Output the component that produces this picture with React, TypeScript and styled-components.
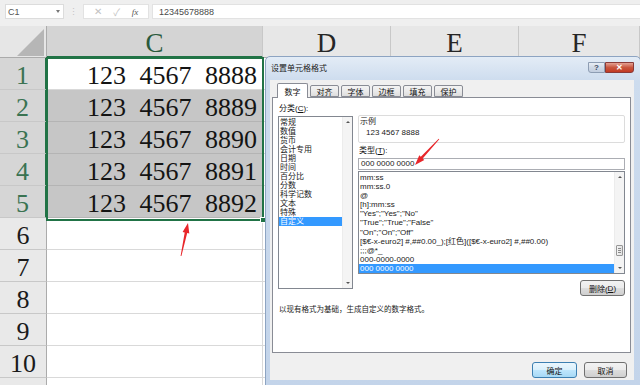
import React from 'react';
import styled, { createGlobalStyle } from 'styled-components';

const Global = createGlobalStyle`
  html, body { margin: 0; padding: 0; width: 640px; height: 385px; overflow: hidden; background: #fff; }
  #root { width: 640px; height: 385px; position: relative; overflow: hidden; }
`;

const UI = `"Liberation Sans", "Noto Sans CJK SC", sans-serif`;
const SERIF = `"Liberation Serif", "Noto Serif", serif`;

/* ---------- formula bar ---------- */
const FormulaBar = styled.div`
  height: 26px;
  box-sizing: border-box;
  background: #efefef;
  display: flex;
  align-items: flex-start;
  padding: 4px 0 0 5px;
  font-family: ${UI};
  font-size: 9px;
  color: #555;
`;
const NameBox = styled.div`
  width: 59px;
  height: 15px;
  box-sizing: border-box;
  background: #fff;
  border: 1px solid #dcdcdc;
  display: flex;
  align-items: center;
  justify-content: space-between;
  padding: 0 3px 0 2px;
`;
const Caret = styled.span`
  width: 0;
  height: 0;
  border-left: 2.5px solid transparent;
  border-right: 2.5px solid transparent;
  border-top: 3px solid #777;
`;
const Grip = styled.div`
  width: 19px;
  height: 15px;
  display: flex;
  align-items: center;
  justify-content: center;
  color: #c4c4c4;
  font-size: 9px;
`;
const FxBox = styled.div`
  width: 66px;
  height: 15px;
  box-sizing: border-box;
  background: #fff;
  border: 1px solid #e2e2e2;
  display: flex;
  align-items: center;
  justify-content: space-around;
  padding: 0 4px;
`;
const FxIcon = styled.span<{ $dark?: boolean }>`
  color: ${(p) => (p.$dark ? '#555' : '#c2c2c2')};
  font-family: ${(p) => (p.$dark ? SERIF : UI)};
  font-style: ${(p) => (p.$dark ? 'italic' : 'normal')};
  font-size: ${(p) => (p.$dark ? '9px' : '10px')};
`;
const FormulaInput = styled.div`
  flex: 1;
  height: 15px;
  margin-left: 3px;
  box-sizing: border-box;
  background: #fff;
  border: 1px solid #e2e2e2;
  border-right: none;
  display: flex;
  align-items: center;
  padding-left: 6px;
  color: #4a4a4a;
`;

/* ---------- sheet ---------- */
const SheetGrid = styled.div`
  position: relative;
  display: grid;
  grid-template-columns: 47px 216px 128px 128px 121px;
  grid-auto-rows: 32px;
  font-family: ${SERIF};
`;
const Corner = styled.div`
  position: relative;
  background: #e6e6e6;
  border-right: 1px solid #ababab;
  border-bottom: 1px solid #ababab;
  box-sizing: border-box;
  &::after {
    content: '';
    position: absolute;
    right: 2px;
    bottom: 1px;
    width: 0;
    height: 0;
    border-left: 27px solid transparent;
    border-bottom: 27px solid #b6b6b6;
  }
`;
const ColHeader = styled.div<{ $sel?: boolean }>`
  box-sizing: border-box;
  background: ${(p) => (p.$sel ? '#d4d4d4' : '#e7e7e7')};
  border-right: 1px solid #c8c8c8;
  border-bottom: ${(p) => (p.$sel ? '2px solid #217346' : '1px solid #ababab')};
  color: ${(p) => (p.$sel ? '#2a5a3c' : '#262626')};
  font-size: 27px;
  line-height: 26px;
  padding-top: 4px;
  text-align: center;
`;
const RowHeader = styled.div<{ $sel?: boolean }>`
  box-sizing: border-box;
  background: ${(p) => (p.$sel ? '#d6d6d6' : '#e9e9e9')};
  border-bottom: 1px solid #c8c8c8;
  border-right: ${(p) => (p.$sel ? '2px solid #217346' : '1px solid #ababab')};
  color: ${(p) => (p.$sel ? '#3a7352' : '#1a1a1a')};
  font-size: 26px;
  line-height: 26px;
  padding-top: 5px;
  text-align: center;
`;
const Cell = styled.div<{ $shade?: boolean }>`
  box-sizing: border-box;
  background: ${(p) => (p.$shade ? '#c6c6c6' : '#fff')};
  border-right: 1px solid #d9d9d9;
  border-bottom: 1px solid ${(p) => (p.$shade ? '#b4b4b4' : '#d9d9d9')};
  color: #141414;
  font-size: 26px;
  line-height: 26px;
  padding: 5px 5px 0 0;
  text-align: right;
  word-spacing: 7px;
  white-space: nowrap;
`;
const Selection = styled.div`
  position: absolute;
  left: 46px;
  top: 31px;
  width: 218px;
  height: 164px;
  box-sizing: border-box;
  border: 2px solid #217346;
  pointer-events: none;
  &::after {
    content: '';
    position: absolute;
    right: -4px;
    bottom: -4px;
    width: 4px;
    height: 4px;
    background: #217346;
    border: 1px solid #fff;
  }
`;

/* ---------- dialog ---------- */
const Dialog = styled.div`
  position: absolute;
  left: 265px;
  top: 56px;
  width: 376px;
  height: 330px;
  box-sizing: border-box;
  border: 1px solid #8da4c2;
  border-radius: 5px 5px 0 0;
  background: linear-gradient(#e3ecf6, #cddcee 24px, #c3d4ea);
  display: flex;
  flex-direction: column;
  padding: 0 6px 5px 4px;
  font-family: ${UI};
  font-size: 8px;
  color: #111;
`;
const TitleBar = styled.div`
  height: 23px;
  display: flex;
  align-items: flex-start;
`;
const Title = styled.div`
  margin-top: 7px;
  padding-left: 1px;
  font-size: 8px;
  line-height: 10px;
  color: #1b1b1b;
`;
const WinButtons = styled.div`
  margin-left: auto;
  margin-top: 5px;
  display: flex;
`;
const WinBtn = styled.div<{ $close?: boolean }>`
  width: ${(p) => (p.$close ? '29px' : '17px')};
  height: 11px;
  box-sizing: border-box;
  border: 1px solid ${(p) => (p.$close ? '#8a3a38' : '#8d9db3')};
  border-radius: ${(p) => (p.$close ? '0 0 3px 0' : '0 0 0 3px')};
  background: ${(p) =>
    p.$close ? 'linear-gradient(#e4a194, #c9563f 50%, #c23a23)' : 'linear-gradient(#e9eef5, #cfd9e6 50%, #c2cedf)'};
  color: ${(p) => (p.$close ? '#fff' : '#3b4a60')};
  font-size: 8px;
  line-height: 9px;
  font-weight: bold;
  text-align: center;
`;
const Body = styled.div`
  flex: 1;
  background: #f0f0f0;
  padding: 3px 3px 0 2px;
  display: flex;
  flex-direction: column;
`;
const TabRow = styled.div`
  height: 14px;
  display: flex;
  align-items: flex-end;
  gap: 2px;
  padding-left: 5px;
  position: relative;
  z-index: 1;
`;
const Tab = styled.div<{ $active?: boolean }>`
  width: ${(p) => (p.$active ? '31px' : '29px')};
  height: ${(p) => (p.$active ? '15px' : '12px')};
  margin-bottom: ${(p) => (p.$active ? '-1px' : '0')};
  box-sizing: border-box;
  border: 1px solid #898c95;
  border-bottom: ${(p) => (p.$active ? 'none' : '1px solid #898c95')};
  border-radius: 2px 2px 0 0;
  background: ${(p) => (p.$active ? '#fff' : 'linear-gradient(#f3f3f3, #ebebeb 50%, #dddddd)')};
  display: flex;
  align-items: center;
  justify-content: center;
  font-size: 8px;
`;
const Panel = styled.div`
  height: 256px;
  box-sizing: border-box;
  background: #fff;
  border: 1px solid #898c95;
  padding: 5px 5px 0 5px;
  display: flex;
  flex-direction: column;
`;
const Columns = styled.div`
  display: flex;
  gap: 5px;
`;
const LeftCol = styled.div`
  width: 75px;
  display: flex;
  flex-direction: column;
`;
const RightCol = styled.div`
  width: 267px;
  display: flex;
  flex-direction: column;
`;
const Label = styled.div<{ $mt?: number }>`
  height: 11px;
  line-height: 11px;
  margin-top: ${(p) => p.$mt ?? 0}px;
  padding-left: 1px;
  & u { text-decoration: underline; }
`;
const ListBox = styled.div<{ $h: number; $mt: number }>`
  height: ${(p) => p.$h}px;
  margin-top: ${(p) => p.$mt}px;
  box-sizing: border-box;
  border: 1px solid #828790;
  background: #fff;
  display: flex;
`;
const Items = styled.div`
  flex: 1;
  padding-top: 1px;
  overflow: hidden;
`;
const Item = styled.div<{ $sel?: boolean; $lh: number }>`
  height: ${(p) => p.$lh}px;
  line-height: ${(p) => p.$lh}px;
  padding-left: 1px;
  white-space: nowrap;
  background: ${(p) => (p.$sel ? '#3399ff' : 'transparent')};
  color: ${(p) => (p.$sel ? '#fff' : '#222')};
`;
const ScrollBar = styled.div`
  width: 9px;
  background: #f4f4f4;
  border-left: 1px solid #ececec;
  display: flex;
  flex-direction: column;
  align-items: center;
`;
const Arrow = styled.div<{ $down?: boolean }>`
  width: 0;
  height: 0;
  margin: ${(p) => (p.$down ? 'auto 0 4px' : '4px 0 0')};
  border-left: 2px solid transparent;
  border-right: 2px solid transparent;
  ${(p) => (p.$down ? 'border-top: 2px solid #555;' : 'border-bottom: 2px solid #555;')}
`;
const Thumb = styled.div`
  width: 7px;
  height: 11px;
  margin-top: 67px;
  box-sizing: border-box;
  border: 1px solid #979797;
  border-radius: 1px;
  background: linear-gradient(90deg, #f3f3f3, #e2e2e2);
  display: flex;
  flex-direction: column;
  align-items: center;
  justify-content: center;
  gap: 1px;
  & > i { display: block; width: 3px; height: 1px; background: #8a8a8a; }
`;
const SampleGroup = styled.div`
  margin-top: 12px;
  height: 28px;
  box-sizing: border-box;
  border: 1px solid #dcdcdc;
  border-radius: 2px;
  padding: 0 0 0 1px;
  & > div:last-child { padding-left: 6px; }
`;
const SampleLine = styled.div`
  height: 10px;
  line-height: 10px;
  margin-top: 1px;
  color: #222;
`;
const TypeInput = styled.div`
  margin-top: 2px;
  height: 12px;
  box-sizing: border-box;
  border: 1px solid #abadb3;
  line-height: 10px;
  padding-left: 2px;
  color: #222;
`;
const PushButton = styled.div<{ $w: number; $default?: boolean }>`
  width: ${(p) => p.$w}px;
  height: 16px;
  box-sizing: border-box;
  border: 1px solid ${(p) => (p.$default ? '#3c7fb1' : '#707070')};
  border-radius: 3px;
  background: ${(p) =>
    p.$default
      ? 'linear-gradient(#eaf6fd, #d9f0fc 50%, #bee6fd 51%, #a7d9f5)'
      : 'linear-gradient(#f2f2f2, #ebebeb 50%, #dddddd 51%, #cfcfcf)'};
  display: flex;
  align-items: center;
  justify-content: center;
  font-size: 8px;
  color: #111;
  & u { text-decoration: underline; }
`;
const DeleteRow = styled.div`
  margin-top: 6px;
  display: flex;
  justify-content: flex-end;
`;
const Description = styled.div`
  margin-top: 8px;
  padding-left: 1px;
  font-size: 7.5px;
  line-height: 11px;
  color: #222;
`;
const Footer = styled.div`
  flex: 1;
  display: flex;
  justify-content: flex-end;
  align-items: flex-start;
  gap: 7px;
  padding: 9px 4px 0 0;
`;

/* ---------- red annotation arrows ---------- */
const Overlay = styled.svg`
  position: absolute;
  left: 0;
  top: 0;
  pointer-events: none;
`;

function arrowPoints(tx: number, ty: number, px: number, py: number) {
  const dx = px - tx;
  const dy = py - ty;
  const len = Math.hypot(dx, dy);
  const ux = dx / len;
  const uy = dy / len;
  const nx = -uy;
  const ny = ux;
  const hl = 10;
  const bx = px - ux * hl;
  const by = py - uy * hl;
  const pts = [
    [tx + nx * 0.4, ty + ny * 0.4],
    [bx + nx * 1.3, by + ny * 1.3],
    [bx + nx * 3.4, by + ny * 3.4],
    [px, py],
    [bx - nx * 3.4, by - ny * 3.4],
    [bx - nx * 1.3, by - ny * 1.3],
    [tx - nx * 0.4, ty - ny * 0.4],
  ];
  return pts.map((p) => p.map((v) => v.toFixed(1)).join(',')).join(' ');
}

const categories = ['常规', '数值', '货币', '会计专用', '日期', '时间', '百分比', '分数', '科学记数', '文本', '特殊', '自定义'];
const formats = [
  'mm:ss',
  'mm:ss.0',
  '@',
  '[h]:mm:ss',
  '"Yes";"Yes";"No"',
  '"True";"True";"False"',
  '"On";"On";"Off"',
  '[$€-x-euro2] #,##0.00_);[红色]([$€-x-euro2] #,##0.00)',
  ';;;@*_',
  '000-0000-0000',
  '000 0000 0000',
];
const tabs = ['数字', '对齐', '字体', '边框', '填充', '保护'];
const values = ['8888', '8889', '8890', '8891', '8892'];

export default function App() {
  const rows = Array.from({ length: 11 }, (_, i) => i + 1);
  return (
    <>
      <Global />
      <FormulaBar>
        <NameBox>
          <span>C1</span>
          <Caret />
        </NameBox>
        <Grip>⋮</Grip>
        <FxBox>
          <FxIcon>✕</FxIcon>
          <FxIcon>✓</FxIcon>
          <FxIcon $dark>fx</FxIcon>
        </FxBox>
        <FormulaInput>12345678888</FormulaInput>
      </FormulaBar>
      <SheetGrid>
        <Corner />
        <ColHeader $sel>C</ColHeader>
        <ColHeader>D</ColHeader>
        <ColHeader>E</ColHeader>
        <ColHeader>F</ColHeader>
        {rows.map((r) => (
          <React.Fragment key={r}>
            <RowHeader $sel={r <= 5}>{r <= 10 ? r : ''}</RowHeader>
            <Cell $shade={r >= 2 && r <= 5}>{r <= 5 ? `123 4567 ${values[r - 1]}` : ''}</Cell>
            <Cell />
            <Cell />
            <Cell />
          </React.Fragment>
        ))}
        <Selection />
      </SheetGrid>

      <Dialog>
        <TitleBar>
          <Title>设置单元格格式</Title>
          <WinButtons>
            <WinBtn>?</WinBtn>
            <WinBtn $close>✕</WinBtn>
          </WinButtons>
        </TitleBar>
        <Body>
          <TabRow>
            {tabs.map((t, i) => (
              <Tab key={t} $active={i === 0}>
                {t}
              </Tab>
            ))}
          </TabRow>
          <Panel>
            <Columns>
              <LeftCol>
                <Label>
                  分类(<u>C</u>):
                </Label>
                <ListBox $h={173} $mt={2}>
                  <Items>
                    {categories.map((c, i) => (
                      <Item key={c} $lh={9} $sel={i === categories.length - 1}>
                        {c}
                      </Item>
                    ))}
                  </Items>
                  <ScrollBar>
                    <Arrow />
                    <Arrow $down />
                  </ScrollBar>
                </ListBox>
              </LeftCol>
              <RightCol>
                <SampleGroup>
                  <SampleLine>示例</SampleLine>
                  <SampleLine>123 4567 8888</SampleLine>
                </SampleGroup>
                <Label $mt={2}>
                  类型(<u>T</u>):
                </Label>
                <TypeInput>000 0000 0000</TypeInput>
                <ListBox $h={103} $mt={1}>
                  <Items>
                    {formats.map((f, i) => (
                      <Item key={f} $lh={9.1} $sel={i === formats.length - 1}>
                        {f}
                      </Item>
                    ))}
                  </Items>
                  <ScrollBar>
                    <Arrow />
                    <Thumb>
                      <i />
                      <i />
                      <i />
                    </Thumb>
                    <Arrow $down />
                  </ScrollBar>
                </ListBox>
                <DeleteRow>
                  <PushButton $w={45}>
                    删除(<u>D</u>)
                  </PushButton>
                </DeleteRow>
              </RightCol>
            </Columns>
            <Description>以现有格式为基础，生成自定义的数字格式。</Description>
          </Panel>
          <Footer>
            <PushButton $w={45} $default>
              确定
            </PushButton>
            <PushButton $w={43}>取消</PushButton>
          </Footer>
        </Body>
      </Dialog>

      <Overlay width={640} height={385} viewBox="0 0 640 385">
        <polygon points={arrowPoints(181, 256, 188, 223)} fill="#e8262a" />
        <polygon points={arrowPoints(439, 139, 415, 165)} fill="#e8262a" />
      </Overlay>
    </>
  );
}
